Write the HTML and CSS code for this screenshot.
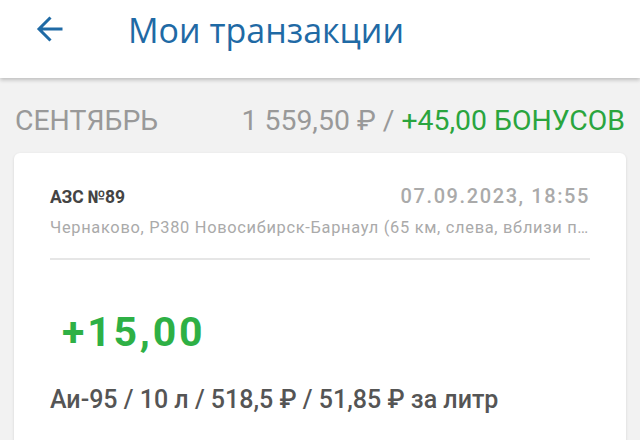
FILE: index.html
```html
<!DOCTYPE html>
<html lang="ru">
<head>
<meta charset="utf-8">
<link rel="stylesheet" href="styles.css">
</head>
<body>
<header class="appbar">
  <svg class="back" width="28" height="28" viewBox="0 0 28 28" aria-hidden="true">
    <path d="M26.5 14H3.5M14.5 2.5L3 14 14.5 25.5" fill="none" stroke="#1f6aa5" stroke-width="3" stroke-linecap="butt"/>
  </svg>
  <h1 class="title">Мои транзакции</h1>
</header>
<section class="summary">
  <span class="month">СЕНТЯБРЬ</span>
  <span class="total">1 559,50 ₽ / <span class="bonus">+45,00 БОНУСОВ</span></span>
</section>
<article class="card">
  <div class="card-head">
    <span class="station">АЗС №89</span>
    <span class="date">07.09.2023, 18:55</span>
  </div>
  <div class="address">Чернаково, Р380 Новосибирск-Барнаул (65 км, слева, вблизи поселка Чернаково)</div>
  <div class="divider"></div>
  <div class="amount">+15,00</div>
  <div class="details">Аи-95 / 10 л / 518,5 ₽ / 51,85 ₽ за литр</div>
</article>
</body>
</html>
```
FILE: styles.css
```css
html, body {
  margin: 0;
  padding: 0;
}
body {
  background: #f2f2f2;
  font-family: Roboto, "Liberation Sans", sans-serif;
  width: 640px;
  height: 440px;
  overflow: hidden;
}
.appbar {
  height: 78px;
  box-sizing: border-box;
  padding-top: 10px;
  background: #fff;
  display: flex;
  align-items: flex-start;
  box-shadow: 0 2px 4px rgba(0, 0, 0, 0.22);
  position: relative;
  z-index: 1;
}
.back {
  margin: 5px 0 0 36px;
  flex: none;
}
.title {
  margin: 0 0 0 64px;
  font-weight: 400;
  font-size: 34px;
  line-height: 40px;
  color: #1f6aa5;
  font-family: "Open Sans", Roboto, sans-serif;
}
.summary {
  display: flex;
  justify-content: space-between;
  align-items: flex-start;
  box-sizing: border-box;
  height: 75px;
  padding: 26px 15px 0 15px;
  font-size: 28.4px;
  line-height: 34px;
  color: #999;
}
.bonus {
  color: #2aa53e;
}
.card {
  margin: 0 14px;
  background: #fff;
  border-radius: 6px;
  box-shadow: 0 1px 3px rgba(0, 0, 0, 0.12);
  padding: 31px 36px 40px 36px;
}
.card-head {
  display: flex;
  justify-content: space-between;
  align-items: baseline;
  line-height: 24px;
}
.station {
  font-weight: 700;
  font-size: 17.5px;
  color: #444;
  letter-spacing: -0.2px;
}
.date {
  font-size: 20px;
  font-weight: 500;
  color: #aaa;
  letter-spacing: 1.6px;
}
.address {
  margin-top: 9px;
  font-size: 16.4px;
  line-height: 20px;
  letter-spacing: 0.7px;
  color: #aaa;
  white-space: nowrap;
  overflow: hidden;
  text-overflow: ellipsis;
}
.divider {
  margin-top: 20px;
  height: 2px;
  background: #e6e6e6;
}
.amount {
  margin: 48px 0 0 12px;
  font-size: 41px;
  line-height: 48px;
  letter-spacing: 2.8px;
  font-weight: 700;
  color: #2eb045;
}
.details {
  margin-top: 29px;
  font-size: 25px;
  line-height: 30px;
  font-weight: 500;
  color: #555;
}
```
